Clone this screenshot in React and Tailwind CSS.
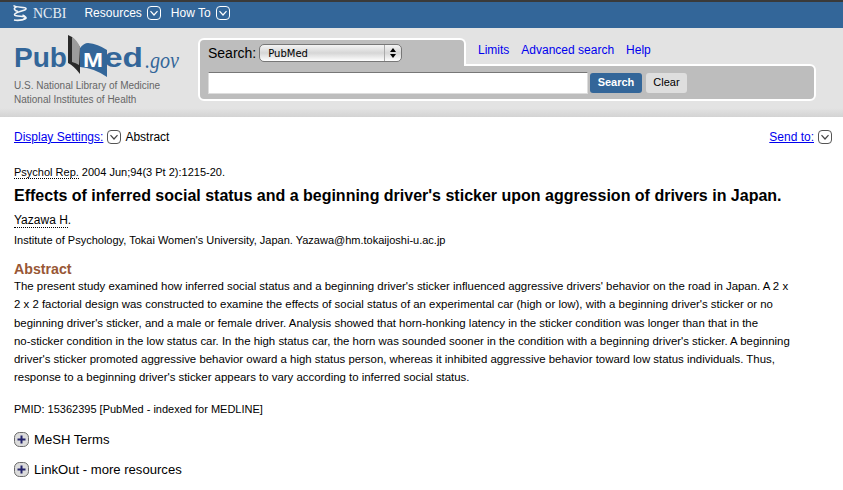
const Arrow = ({ light }) => (
  <svg width="14" height="14" viewBox="0 0 14 14" fill="none" className="shrink-0">
    <rect x="0.5" y="0.5" width="13" height="13" rx="3.5" fill={light ? "none" : "#fff"} stroke={light ? "#fff" : "#555"} />
    <path d="M3.5 5.2 7 9 10.5 5.2" stroke={light ? "#fff" : "#444"} strokeWidth="1.2" />
  </svg>
);

const Plus = () => (
  <svg width="15" height="15" viewBox="0 0 15 15" className="shrink-0">
    <rect x="0.5" y="0.5" width="14" height="14" rx="5" fill="#dcdcdc" stroke="#6a6a6a" />
    <path d="M3.5 7.500h8M7.500 3.500v8" stroke="#23236b" strokeWidth="2" />
  </svg>
);

function Logo() {
  return (
    <svg width="178" height="48" viewBox="0 0 178 48" className="block">
      <path d="M54 5 L58 7 L66 17 L66 44 Q60 36 54 33Z" fill="#2a2a2a" />
      <path d="M58 7 Q63 10 66 17 L65 35 Q62 33 58 32Z" fill="#9c9c9c" />
      <path d="M66 18 Q70 13 74 13 Q84 14 93 20 L93 47 Q80 38 66 37Z" fill="#336699" />
      <text x="0" y="37" fontFamily="Liberation Sans" fontWeight="700" fontSize="28" fill="#336699" textLength="53" lengthAdjust="spacingAndGlyphs">Pub</text>
      <text x="69" y="37" fontFamily="Liberation Sans" fontWeight="700" fontSize="20" fill="#fff" textLength="20" lengthAdjust="spacingAndGlyphs">M</text>
      <text x="90" y="37" fontFamily="Liberation Sans" fontWeight="700" fontSize="27" fill="#336699" textLength="39" lengthAdjust="spacingAndGlyphs">ed</text>
      <text x="131" y="38" fontFamily="Liberation Serif" fontStyle="italic" fontSize="24" fill="#336699" textLength="34" lengthAdjust="spacingAndGlyphs">.gov</text>
    </svg>
  );
}

export default function App() {
  return (
    <div className="w-[843px] h-[490px] overflow-hidden bg-white text-black font-['Liberation_Sans',Arial,sans-serif]">
      <div className="h-[28px] bg-[#336699] border-t-2 border-[#3a3a3a] flex items-center pl-[12px] pb-[4px] text-white">
        <svg width="16" height="18" viewBox="0 0 16 18" fill="none" stroke="#f2f5f8" strokeWidth="1.6">
          <path d="M1.500 1.500c3 2.500 11.500 1 12.500 3S3 8 2.500 10.500 13 11.500 14 13.500s-7 3.500-12 2.500" />
          <path d="M6 7.500C2 6.500 1 4 4.500 3M10.500 11c3.500 1 3.500 3.500.5 4.500" />
        </svg>
        <span className="ml-[5px] font-['Liberation_Serif',serif] text-[14px] text-[#e6edf4]">NCBI</span>
        <span className="ml-[18px] text-[12px]">Resources</span>
        <span className="ml-[5px]"><Arrow light /></span>
        <span className="ml-[10px] text-[12px]">How To</span>
        <span className="ml-[5px]"><Arrow light /></span>
      </div>

      <div className="h-[89px] bg-[linear-gradient(to_bottom,#e3e3e3_90%,#d3d3d3)] flex">
        <div className="w-[198px] pl-[14px] pt-[2px] shrink-0">
          <Logo />
          <div className="text-[10px] leading-[14px] text-[#666] mt-[1px] whitespace-nowrap">
            <div>U.S. National Library of Medicine</div>
            <div>National Institutes of Health</div>
          </div>
        </div>
        <div className="w-[618px] pt-[10px]">
          <div className="flex h-[26px]">
            <div className="relative z-10 w-[268px] h-[28px] bg-[#bdbdbd] border-2 border-b-0 border-white rounded-t-[6px] flex items-center pl-[8px] text-[14px]">
              Search:
              <div className="ml-[3px] w-[143px] h-[18px] rounded-[5px] border border-[#777] bg-gradient-to-b from-[#f4f4f4] via-[#d6d6d6] to-white flex items-center text-[10px] pl-[8px] font-['DejaVu_Sans',sans-serif]">
                <span className="flex-1">PubMed</span>
                <span className="w-[17px] h-full border-l border-[#aaa] flex flex-col items-center justify-center gap-[2px]">
                  <span className="w-0 h-0 border-x-[3px] border-x-transparent border-b-[4px] border-b-black" />
                  <span className="w-0 h-0 border-x-[3px] border-x-transparent border-t-[4px] border-t-black" />
                </span>
              </div>
            </div>
            <div className="flex gap-[12px] pl-[12px] pt-[3px] text-[12px] text-[#0000ee]">
              <span>Limits</span>
              <span>Advanced search</span>
              <span>Help</span>
            </div>
          </div>
          <div className="h-[37px] bg-[#bdbdbd] border-2 border-white rounded-b-[6px] rounded-tr-[6px] flex items-center pl-[8px]">
            <div className="w-[380px] h-[22px] bg-white border-t border-[#777] border-x border-x-[#ddd] border-b border-b-[#ddd]" />
            <div className="ml-[2px] w-[52px] h-[20px] rounded-[3px] bg-[#336699] text-white font-bold text-[11px] flex items-center justify-center">Search</div>
            <div className="ml-[4px] w-[41px] h-[20px] rounded-[3px] bg-[#dedede] text-[11px] flex items-center justify-center">Clear</div>
          </div>
        </div>
      </div>

      <div className="pl-[14px] pr-[11px] pt-[10px]">
        <div className="flex items-center h-[20px] text-[12px]">
          <a className="text-[#0000ee] underline">Display Settings:</a>
          <span className="ml-[4px]"><Arrow /></span>
          <span className="ml-[4px]">Abstract</span>
          <a className="ml-auto text-[#0000ee] underline">Send to:</a>
          <span className="ml-[4px]"><Arrow /></span>
        </div>

        <div className="mt-[18px] text-[11px] leading-[14px]">
          <span className="border-b border-dotted border-black">Psychol Rep.</span> 2004 Jun;94(3 Pt 2):1215-20.
        </div>
        <h1 className="mt-[7px] text-[16px] leading-[20px] font-bold whitespace-nowrap">
          Effects of inferred social status and a beginning driver's sticker upon aggression of drivers in Japan.
        </h1>
        <div className="mt-[7px] text-[12px] leading-[14px]">
          <span className="border-b border-dotted border-black">Yazawa H</span>.
        </div>
        <div className="mt-[6px] text-[11px] leading-[14px]">
          Institute of Psychology, Tokai Women's University, Japan. Yazawa@hm.tokaijoshi-u.ac.jp
        </div>
        <h2 className="mt-[14px] text-[14.200px] leading-[16px] font-bold text-[#985735]">Abstract</h2>
        <div className="text-[11.410px] leading-[18.250px] whitespace-nowrap">
          <div>The present study examined how inferred social status and a beginning driver's sticker influenced aggressive drivers' behavior on the road in Japan. A 2 x</div>
          <div>2 x 2 factorial design was constructed to examine the effects of social status of an experimental car (high or low), with a beginning driver's sticker or no</div>
          <div>beginning driver's sticker, and a male or female driver. Analysis showed that horn-honking latency in the sticker condition was longer than that in the</div>
          <div>no-sticker condition in the low status car. In the high status car, the horn was sounded sooner in the condition with a beginning driver's sticker. A beginning</div>
          <div>driver's sticker promoted aggressive behavior oward a high status person, whereas it inhibited aggressive behavior toward low status individuals. Thus,</div>
          <div>response to a beginning driver's sticker appears to vary according to inferred social status.</div>
        </div>
        <div className="mt-[15px] text-[11px] leading-[14px]">PMID: 15362395 [PubMed - indexed for MEDLINE]</div>
        <div className="mt-[16px] flex items-center gap-[5px] text-[13.100px] leading-[16px]"><Plus />MeSH Terms</div>
        <div className="mt-[14px] flex items-center gap-[5px] text-[13.100px] leading-[16px]"><Plus />LinkOut - more resources</div>
      </div>
    </div>
  );
}
